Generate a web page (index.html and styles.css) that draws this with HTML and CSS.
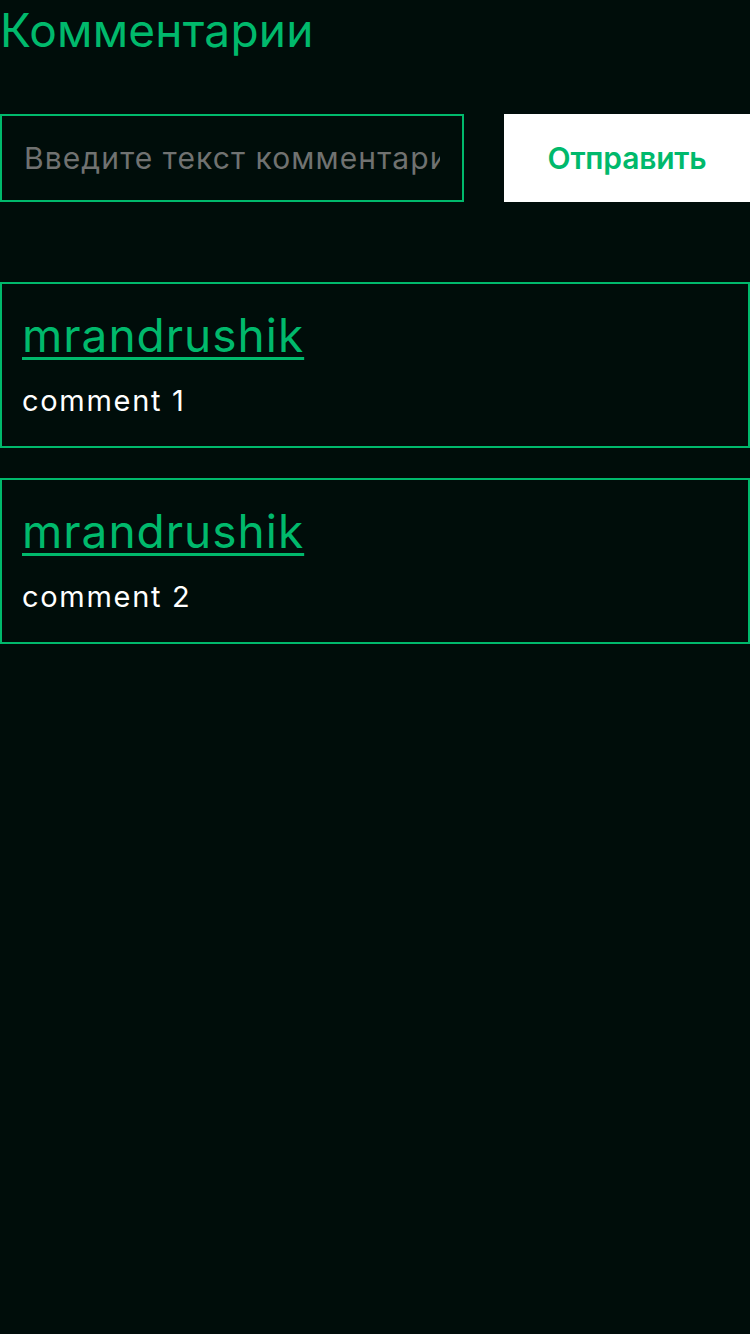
FILE: index.html
```html
<!DOCTYPE html>
<html lang="ru">
<head>
<meta charset="utf-8">
<title>Комментарии</title>
<link rel="stylesheet" href="styles.css">
</head>
<body>
<div class="page">
  <h1 class="title">Комментарии</h1>
  <form class="form">
    <input class="input" type="text" placeholder="Введите текст комментария">
    <button class="send" type="button">Отправить</button>
  </form>
  <div class="list">
    <div class="card">
      <a class="author" href="#">mrandrushik</a>
      <p class="text">comment 1</p>
    </div>
    <div class="card">
      <a class="author" href="#">mrandrushik</a>
      <p class="text">comment 2</p>
    </div>
  </div>
</div>
</body>
</html>
```
FILE: styles.css
```css
html, body {
  margin: 0;
  padding: 0;
  background: #000d0a;
}
.page {
  font-family: Inter, "Noto Sans", sans-serif;
  color: #ffffff;
}
.title {
  margin: 0;
  font-size: 46px;
  font-weight: 400;
  line-height: 60px;
  letter-spacing: 0.2px;
  color: #00b96c;
}
.form {
  display: flex;
  gap: 40px;
  margin-top: 54px;
  height: 88px;
}
.input {
  box-sizing: border-box;
  width: 464px;
  height: 88px;
  border: 2px solid #00b96c;
  background: transparent;
  padding: 0 22px;
  font-family: Inter, "Noto Sans", sans-serif;
  font-size: 30px;
  letter-spacing: 1.1px;
  color: #fff;
  outline: none;
}
.input::placeholder {
  color: #707271;
}
.send {
  flex: 1;
  height: 88px;
  border: none;
  background: #ffffff;
  color: #00b96c;
  font-family: Inter, "Noto Sans", sans-serif;
  font-size: 30px;
  font-weight: 600;
  letter-spacing: -0.2px;
  padding: 0;
}
.list {
  display: flex;
  flex-direction: column;
  gap: 30px;
  margin-top: 80px;
}
.card {
  box-sizing: border-box;
  height: 166px;
  border: 2px solid #00b96c;
  padding: 23px 20px 0;
}
.author {
  display: inline-block;
  font-size: 46px;
  line-height: 56px;
  letter-spacing: 1px;
  color: #00b96c;
  text-decoration: underline;
  text-decoration-thickness: 3px;
  text-underline-offset: 5px;
}
.text {
  margin: 20px 0 0;
  font-size: 29px;
  line-height: 36px;
  letter-spacing: 1.7px;
}
```
